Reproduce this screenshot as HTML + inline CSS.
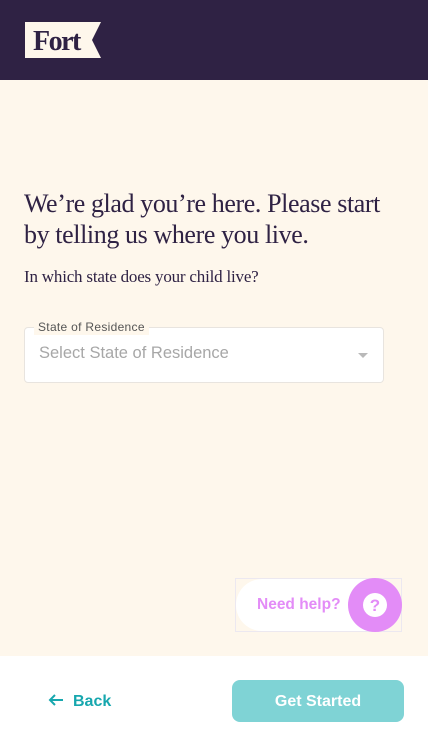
<!DOCTYPE html>
<html><head><meta charset="utf-8"><style>
*{margin:0;padding:0;box-sizing:border-box}
body{width:428px;height:746px;overflow:hidden;background:#fff;font-family:"Liberation Sans",sans-serif;position:relative}
.hdr{position:absolute;left:0;top:0;width:428px;height:80px;background:#2f2244}
.main{position:absolute;left:0;top:80px;width:428px;height:576px;background:#fef7ec}
h1{position:absolute;left:24px;top:188px;width:370px;font-family:"Liberation Serif",serif;font-weight:normal;font-size:26px;line-height:31px;color:#2f2244;letter-spacing:-0.4px}
.q{position:absolute;left:24px;top:267px;font-family:"Liberation Serif",serif;font-size:17px;color:#2f2244;letter-spacing:-0.2px}
.sel{position:absolute;left:24px;top:327px;width:360px;height:56px;background:#fff;border:1px solid #e8e4df;border-radius:4px}
.lbl{position:absolute;left:34px;top:319px;padding:0 4px;background:#fef7ec;font-size:12px;color:#555;letter-spacing:0.3px;line-height:16px}
.ph{position:absolute;left:39px;top:344px;font-size:16.5px;color:#a7a7a7}
.arr{position:absolute;left:358px;top:353px;width:0;height:0;border-left:5px solid transparent;border-right:5px solid transparent;border-top:5px solid #b9b9b9}
.help{position:absolute;left:235px;top:578px;width:167px;height:54px;border:1px solid #ece8f0;}
.pill{position:absolute;left:236px;top:579px;width:165px;height:52px;background:#fff;border-radius:26px}
.ht{position:absolute;left:257px;top:596px;font-size:15.5px;font-weight:bold;color:#e38cf7}
.hc{position:absolute;left:348px;top:578px;width:54px;height:54px;border-radius:50%;background:#e38cf7}
.back{position:absolute;left:48px;top:692px;color:#17a7ae;font-weight:bold;font-size:16px;line-height:20px}
.btn{position:absolute;left:232px;top:680px;width:172px;height:42px;border-radius:8px;background:#7fd3d5;color:#fff;font-weight:bold;font-size:16px;text-align:center;line-height:43px}
</style></head><body>
<div class="hdr">
<svg style="position:absolute;left:25px;top:22px" width="76" height="36"><polygon points="0,0 76,0 67,18 76,36 0,36" fill="#fef7ec"/><text x="8" y="28" font-family="Liberation Serif,serif" font-weight="bold" font-size="28" fill="#2f2244" letter-spacing="-1.5">Fort</text></svg>
</div>
<div class="main"></div>
<h1>We’re glad you’re here. Please start by telling us where you live.</h1>
<div class="q">In which state does your child live?</div>
<div class="sel"></div>
<div class="lbl">State of Residence</div>
<div class="ph">Select State of Residence</div>
<div class="arr"></div>
<div class="help"></div><div class="pill"></div>
<div class="ht">Need help?</div>
<div class="hc"><svg width="54" height="54"><circle cx="27" cy="27" r="12" fill="#fff"/><text x="27" y="33" text-anchor="middle" font-family="Liberation Sans,sans-serif" font-weight="bold" font-size="17" fill="#e38cf7">?</text></svg></div>
<div class="back"><svg width="16" height="14" style="vertical-align:-1px;margin-right:9px"><path d="M15 7H2M7 2L2 7l5 5" stroke="#17a7ae" stroke-width="2" fill="none"/></svg>Back</div>
<div class="btn">Get Started</div>
</body></html>
